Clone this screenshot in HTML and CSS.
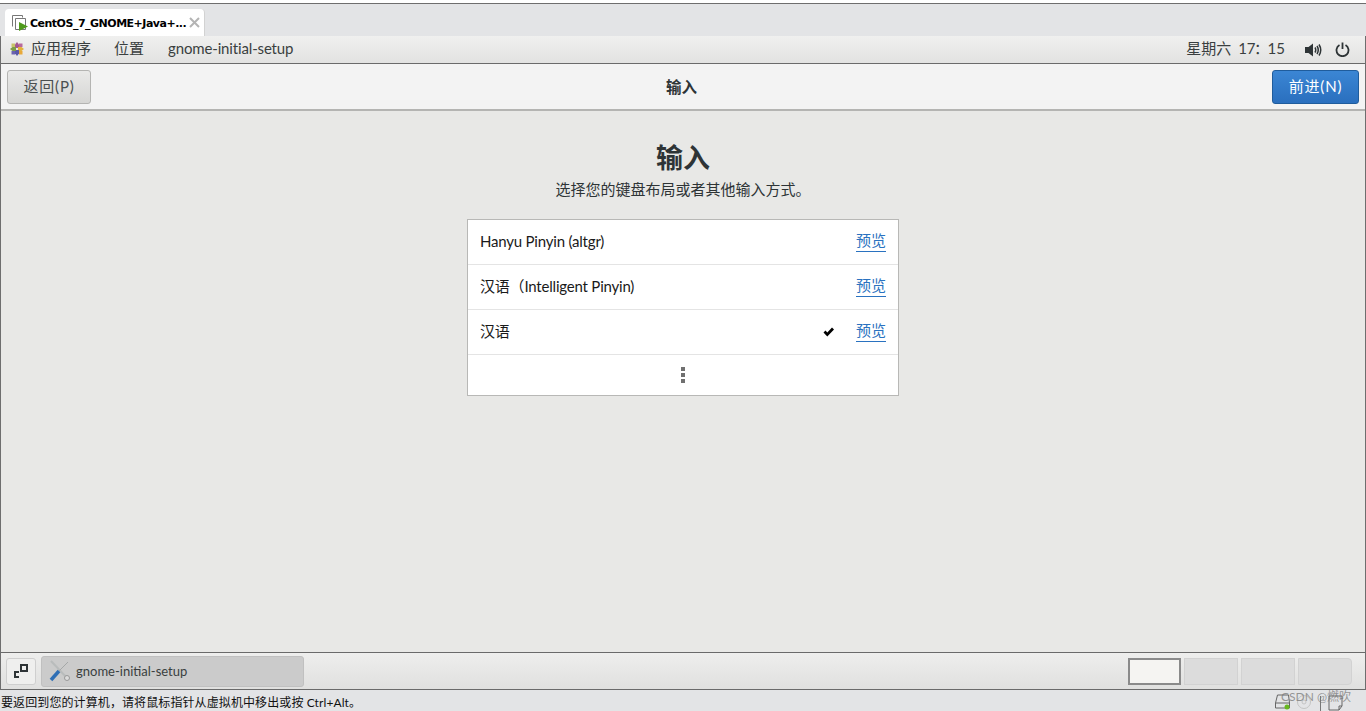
FILE: index.html
```html
<!doctype html>
<html lang="zh">
<head>
    <meta charset="UTF-8">
    <title>CentOS_7_GNOME+Java+...</title>
    <link rel="stylesheet" href="styles.css">
</head>
<body>
<div class="tabstrip">
    <div class="tab">
        <svg class="tab-icon" width="18" height="18" viewBox="0 0 18 18">
            <path d="M1.500 12.500V1.500h10v2" fill="none" stroke="#777"/>
            <path d="M4.500 15.500V4.500h10v11z" fill="#fff" stroke="#777"/>
            <path d="M8 8v9l9-4.500z" fill="#4f9a1c"/>
        </svg>
        <span class="tab-title">CentOS_7_GNOME+Java+...</span>
        <svg class="tab-close" width="11" height="11" viewBox="0 0 11 11">
            <path d="M1 1l9 9M10 1l-9 9" stroke="#b4b4b4" stroke-width="2"/>
        </svg>
    </div>
</div>

<div class="guest">
    <div class="topbar">
        <svg class="logo" width="16" height="16" viewBox="0 0 16 16">
            <path d="M8 1l2 2.500V7H6V3.500z" fill="#a2578f"/>
            <path d="M15 8l-2.500 2H9V6h3.500z" fill="#e3b23c"/>
            <path d="M8 15l-2-2.500V9h4v3.500z" fill="#5a58a8"/>
            <path d="M1 8l2.500-2H7v4H3.500z" fill="#7d9c46"/>
            <path d="M10 2.500h3.500V6H10z" fill="#b96a9c"/>
            <path d="M10 10h3.500v3.500H10z" fill="#e8a93a"/>
            <path d="M2.500 10H6v3.500H2.500z" fill="#6c63b0"/>
            <path d="M2.500 2.500H6V6H2.500z" fill="#c7c46a"/>
        </svg>
        <span class="menu menu-apps">应用程序</span>
        <span class="menu menu-places">位置</span>
        <span class="menu menu-window">gnome-initial-setup</span>
        <span class="clock">星期六 17<span class="colon">：</span>15</span>
        <svg class="tray-sound" width="17" height="14" viewBox="0 0 17 14">
            <path d="M0 4h3.500L8 0.500v13L3.500 10H0z" fill="#2e3436"/>
            <path d="M10 4.500q1.500 2.500 0 5M12 3q2.500 4 0 8M14 1.500q3.500 5.500 0 11" fill="none" stroke="#2e3436" stroke-width="1.500"/>
        </svg>
        <svg class="tray-power" width="15" height="15" viewBox="0 0 15 15">
            <path d="M4.500 3a6 6 0 1 0 6 0" fill="none" stroke="#2e3436" stroke-width="1.800"/>
            <path d="M7.500 0.500v6.500" stroke="#2e3436" stroke-width="1.800"/>
        </svg>
    </div>

    <header class="headerbar">
        <button class="btn">返回(P)</button>
        <div class="headerbar-title">输入</div>
        <button class="btn btn-next">前进(N)</button>
    </header>

    <main class="content">
        <h1>输入</h1>
        <p class="subtitle">选择您的键盘布局或者其他输入方式。</p>
        <ul class="input-list">
            <li class="input-row"><span class="input-name">Hanyu Pinyin (altgr)</span><a class="preview">预览</a></li>
            <li class="input-row"><span class="input-name">汉语（Intelligent Pinyin)</span><a class="preview">预览</a></li>
            <li class="input-row">
                <span class="input-name">汉语</span>
                <svg class="check" width="11" height="10" viewBox="0 0 11 10">
                    <path d="M0.500 5.500L2.500 3.500 4.300 5.500 9 0.500 11 2.500 4.300 9.500z" fill="#000"/>
                </svg>
                <a class="preview">预览</a>
            </li>
            <li class="input-more"><span class="dot"></span><span class="dot"></span><span class="dot"></span></li>
        </ul>
    </main>

    <footer class="bottombar">
        <button class="show-desktop">
            <svg width="14" height="14" viewBox="0 0 14 14">
                <path d="M7 1h6v6H7z" fill="none" stroke="#2e3436" stroke-width="2"/>
                <path d="M0 14V7h5v2H2v3h3v2z" fill="#2e3436"/>
            </svg>
        </button>
        <div class="window-item">
            <svg width="24" height="24" viewBox="0 0 24 24">
                <path d="M3 2l17 18" stroke="#b9bcbc" stroke-width="2"/>
                <path d="M20 3L11 12" stroke="#a5a8a8" stroke-width="1"/>
                <circle cx="19" cy="19" r="2.500" fill="#dcdcdc" stroke="#999"/>
                <path d="M11 12L3 21" stroke="#2f6fb5" stroke-width="3.500"/>
            </svg>
            <span>gnome-initial-setup</span>
        </div>
        <div class="workspaces">
            <div class="workspace active"></div>
            <div class="workspace"></div>
            <div class="workspace"></div>
            <div class="workspace last"></div>
        </div>
    </footer>
</div>

<div class="statusbar">
    <span class="status-text">要返回到您的计算机，请将鼠标指针从虚拟机中移出或按 Ctrl+Alt。</span>
    <div class="status-tray">
        <svg width="18" height="20" viewBox="0 0 18 20">
            <path d="M3.500 3h11l1 8v5h-14v-5z" fill="none" stroke="#666"/>
            <path d="M2 11h13" stroke="#666"/>
            <circle cx="13" cy="15" r="2.500" fill="#68b81e"/>
        </svg>
        <svg width="16" height="18" viewBox="0 0 16 18">
            <circle cx="8" cy="9" r="6.500" fill="none" stroke="#c4c4c4"/>
            <circle cx="8" cy="9" r="2" fill="none" stroke="#c4c4c4"/>
        </svg>
        <svg width="6" height="18" viewBox="0 0 6 18"><path d="M4.500 3v15" stroke="#777"/></svg>
        <svg width="18" height="20" viewBox="0 0 18 20">
            <path d="M3 4h13v10l-3 4H3z" fill="none" stroke="#666"/>
            <path d="M13 18v-4h3" fill="none" stroke="#666"/>
        </svg>
    </div>
    <span class="watermark">CSDN @燃吹</span>
</div>
</body>
</html>
```

FILE: styles.css
```css
* {
    box-sizing: border-box;
}
html, body {
    height: 100%;
}
body {
    margin: 0;
    padding-top: 3px;
    background: #fff;
    font-family: 'Lato', 'Noto Sans CJK SC', sans-serif;
    color: #2e3436;
    overflow: hidden;
    display: flex;
    flex-direction: column;
    height: 711px;
}
.tabstrip {
    height: 33px;
    flex: none;
    background: #e3e4e6;
    border-top: 1px solid #6e6e6e;
    padding: 5px 0 0 5px;
}
.tab {
    width: 200px;
    height: 27px;
    background: #fff;
    border: 1px solid #d2d2d2;
    border-width: 0 1px 0 0;
    border-radius: 4px 4px 0 0;
    display: flex;
    align-items: center;
    padding-left: 6px;
}
.tab-icon {
    flex: none;
}
.tab-title {
    margin-left: 1px;
    padding-top: 1px;
    width: 157px;
    font: bold 11px 'DejaVu Sans', sans-serif;
    color: #000;
    white-space: nowrap;
    letter-spacing: -0.5px;
}
.tab-close {
    margin-left: 2px;
}
.guest {
    flex: 1;
    display: flex;
    flex-direction: column;
    border-left: 1px solid #6e6e6e;
    border-right: 1px solid #6e6e6e;
    min-height: 0;
}
.topbar {
    height: 28px;
    flex: none;
    display: flex;
    align-items: center;
    padding: 0 0 4px 8px;
    background: linear-gradient(#f0f0ef, #e2e2e1);
    border-bottom: 1px solid #6a6a6a;
    font-size: 15px;
    color: #3a3f40;
}
.logo {
    flex: none;
    margin-top: 2px;
}
.menu {
    white-space: nowrap;
}
.menu-apps {
    margin-left: 6px;
    margin-right: 23px;
}
.menu-places {
    margin-right: 24px;
}
.menu-window {
    letter-spacing: -0.15px;
}
.clock {
    margin-left: auto;
    white-space: pre;
    word-spacing: 3px;
}
.colon {
    font-family: 'Noto Sans CJK TC', sans-serif;
    margin: 0 -1.500px;
}
.tray-sound {
    margin-left: 20px;
    margin-top: 4px;
}
.tray-power {
    margin-left: 13px;
    margin-right: 15px;
    margin-top: 4px;
}
.headerbar {
    height: 47px;
    flex: none;
    display: flex;
    align-items: center;
    justify-content: space-between;
    padding: 0 6px 0 6px;
    background: #f3f3f3;
    border-bottom: 2px solid #b4b4b2;
}
.headerbar-title {
    font-size: 15.500px;
    font-weight: 700;
    padding-bottom: 2px;
}
.btn {
    width: 84px;
    height: 34px;
    border: 1px solid #b4b4b2;
    border-radius: 3px;
    background: linear-gradient(#e9e9e8, #d6d6d4);
    color: #4a4f50;
    font: 15px 'Lato', 'Noto Sans CJK SC', sans-serif;
    letter-spacing: 0.8px;
    padding: 0 0 3px;
}
.btn-next {
    width: 87px;
    border-color: #1f5c9c;
    background: linear-gradient(#3b86d4, #2a6fbe);
    color: #fff;
}
.content {
    flex: 1;
    background: #e8e8e6;
    display: flex;
    flex-direction: column;
    align-items: center;
    padding-top: 28px;
    min-height: 0;
}
.content h1 {
    margin: 0;
    font-size: 27px;
    line-height: 38px;
    font-weight: 700;
}
.subtitle {
    margin: 2px 0 20px;
    font-size: 15px;
    line-height: 20px;
}
.input-list {
    list-style: none;
    margin: 0;
    padding: 0;
    width: 432px;
    background: #fff;
    border: 1px solid #b8b8b6;
}
.input-row {
    height: 45px;
    display: flex;
    align-items: center;
    padding: 0 12px;
    border-bottom: 1px solid #e4e4e4;
    font-size: 15px;
    color: #1a1a1a;
}
.input-name {
    margin-right: auto;
    white-space: nowrap;
    line-height: 20px;
    padding-bottom: 2px;
    letter-spacing: -0.2px;
}
.check {
    margin-right: 22px;
}
.preview {
    color: #2a72c0;
    border-bottom: 1px solid #2a72c0;
    line-height: 14px;
    padding-bottom: 4px;
}
.input-more {
    height: 40px;
    display: flex;
    flex-direction: column;
    align-items: center;
    justify-content: center;
    gap: 2px;
}
.dot {
    width: 4px;
    height: 4px;
    background: #707070;
}
.bottombar {
    height: 38px;
    flex: none;
    display: flex;
    align-items: center;
    padding: 0 13px 0 5px;
    background: linear-gradient(#eeeeed, #e0e0df);
    border-top: 1px solid #6a6a6a;
    border-bottom: 1px solid #6a6a6a;
}
.show-desktop {
    width: 30px;
    height: 27px;
    padding: 0;
    display: flex;
    align-items: center;
    justify-content: center;
    background: #efefee;
    border: 1px solid #cfcfcf;
    border-radius: 3px;
}
.window-item {
    width: 263px;
    height: 31px;
    margin-left: 5px;
    display: flex;
    align-items: center;
    gap: 4px;
    padding-left: 6px;
    background: #cbcbcb;
    border: 1px solid #c0c0c0;
    border-radius: 3px;
    font-size: 13px;
    color: #3a3f40;
}
.workspaces {
    margin-left: auto;
    display: flex;
    gap: 3px;
}
.workspace {
    width: 54px;
    height: 27px;
    background: #dcdcdc;
    border: 1px solid #d2d2d2;
}
.workspace.active {
    background: #f5f4f2;
    border: 2px solid #8a8a8a;
    width: 53px;
}
.workspace.last {
    border-radius: 0 4px 4px 0;
}
.statusbar {
    position: relative;
    height: 21px;
    flex: none;
    background: #e3e4e6;
    display: flex;
    align-items: center;
    font-size: 12px;
    color: #111;
    padding: 2px 0 0 1px;
}
.status-text {
    letter-spacing: 0.1px;
}
.status-tray {
    margin-left: auto;
    margin-right: 22px;
    display: flex;
    align-items: center;
    gap: 4px;
}
.watermark {
    position: absolute;
    right: 15px;
    top: -3px;
    font-size: 12px;
    color: rgba(120, 120, 120, 0.75);
}
```
